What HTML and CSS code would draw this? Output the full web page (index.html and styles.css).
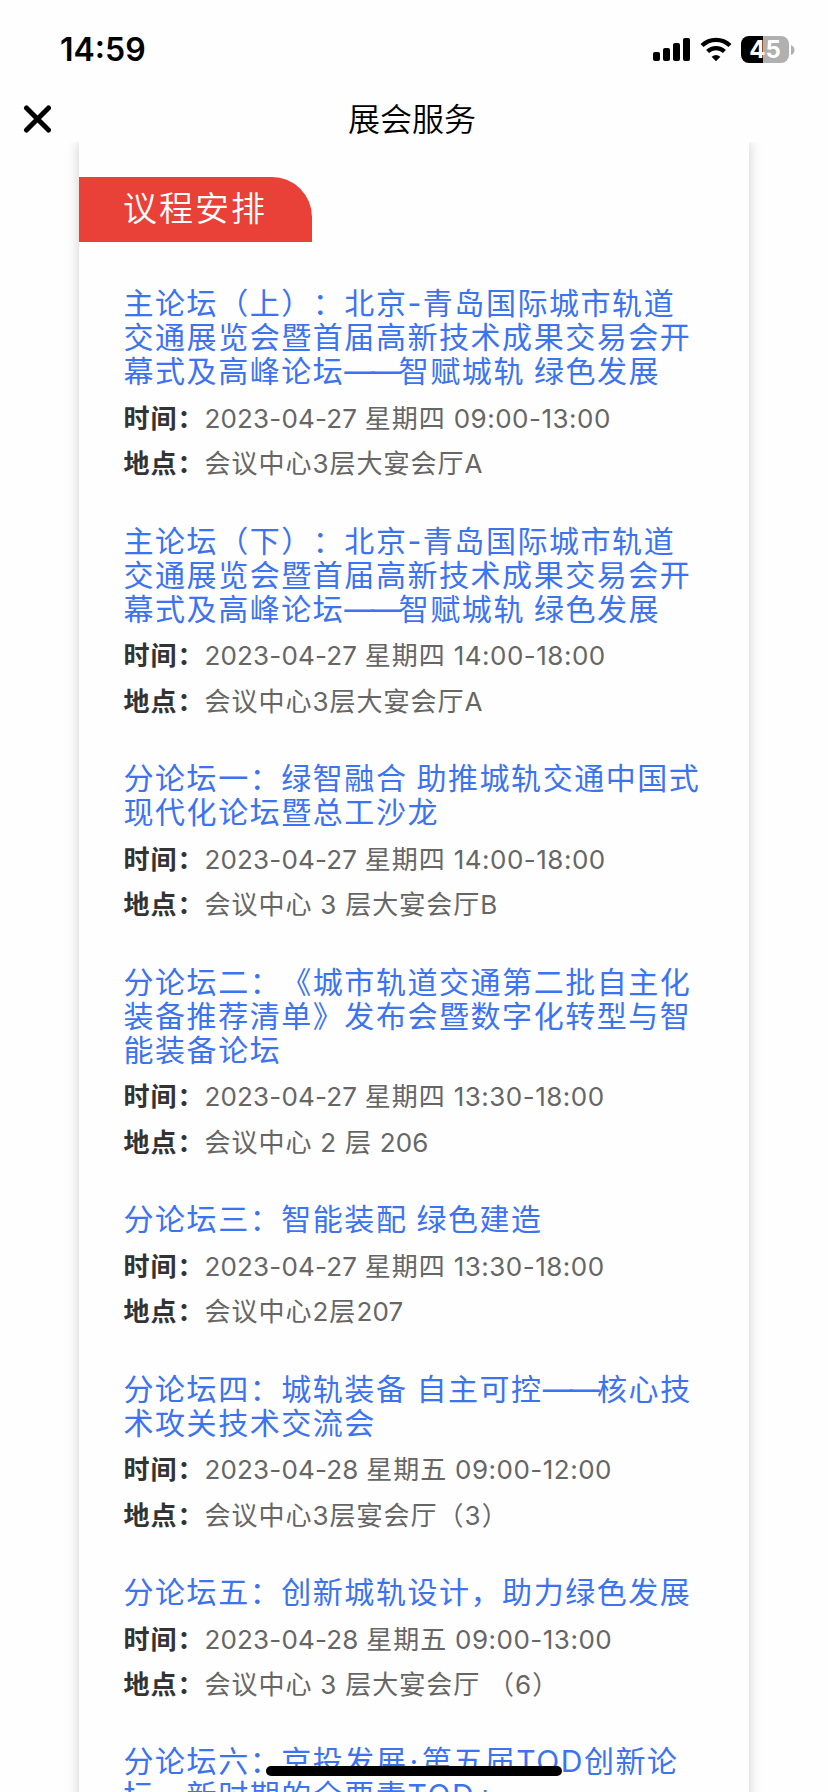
FILE: index.html
```html
<!DOCTYPE html>
<html lang="zh-CN">

<head>
    <meta charset="UTF-8">
    <title>展会服务</title>
    <link rel="stylesheet" href="styles.css">
</head>

<body>
    <div class="status-bar">
        <span class="clock">14:59</span>
        <div class="status-icons">
            <svg class="signal" width="37" height="23" viewBox="0 0 37 23">
                <rect x="0" y="14" width="7" height="9" rx="2" />
                <rect x="10" y="10" width="7" height="13" rx="2" />
                <rect x="20" y="5" width="7" height="18" rx="2" />
                <rect x="30" y="0" width="7" height="23" rx="2" />
            </svg>
            <svg class="wifi" width="32" height="25" viewBox="0 0 32 25">
                <path d="M2 8.600a20 20 0 0 1 28 0M7.600 14.500a12 12 0 0 1 16.800 0" fill="none" stroke="#000" stroke-width="4.200" />
                <path d="M16 24.300l-4.400-4.600q4.400-3.600 8.800 0z" />
            </svg>
            <div class="battery"><span>45</span></div>
            <svg class="battery-tip" width="4" height="10" viewBox="0 0 4 10">
                <path d="M0 0q3.500 1.500 3.500 5t-3.500 5z" fill="#b0b0b0" />
            </svg>
        </div>
    </div>

    <div class="nav-bar">
        <svg class="close" width="28" height="28" viewBox="0 0 28 28">
            <path d="M3.500 3l22 22M25.500 3l-22 22" stroke="#000" stroke-width="5" stroke-linecap="round" />
        </svg>
        <h1>展会服务</h1>
    </div>

    <div class="page">
        <div class="card">
            <h2 class="section-tag">议程安排</h2>

            <div class="agenda">
                <div class="agenda-item">
                    <h3>主论坛（上）：北京-青岛国际城市轨道<br>交通展览会暨首届高新技术成果交易会开<br>幕式及高峰论坛<span class="dash">——</span>智赋城轨 绿色发展</h3>
                    <p><b>时间：</b><span class="date">2023-04-27</span> 星期四 <span class="time">09:00-13:00</span></p>
                    <p><b>地点：</b>会议中心3层大宴会厅A</p>
                </div>
                <div class="agenda-item">
                    <h3>主论坛（下）：北京-青岛国际城市轨道<br>交通展览会暨首届高新技术成果交易会开<br>幕式及高峰论坛<span class="dash">——</span>智赋城轨 绿色发展</h3>
                    <p><b>时间：</b><span class="date">2023-04-27</span> 星期四 <span class="time">14:00-18:00</span></p>
                    <p><b>地点：</b>会议中心3层大宴会厅A</p>
                </div>
                <div class="agenda-item">
                    <h3>分论坛一：绿智融合 助推城轨交通中国式<br>现代化论坛暨总工沙龙</h3>
                    <p><b>时间：</b><span class="date">2023-04-27</span> 星期四 <span class="time">14:00-18:00</span></p>
                    <p><b>地点：</b>会议中心 3 层大宴会厅B</p>
                </div>
                <div class="agenda-item">
                    <h3>分论坛二：《城市轨道交通第二批自主化<br>装备推荐清单》发布会暨数字化转型与智<br>能装备论坛</h3>
                    <p><b>时间：</b><span class="date">2023-04-27</span> 星期四 <span class="time">13:30-18:00</span></p>
                    <p><b>地点：</b>会议中心 2 层 <span class="date">206</span></p>
                </div>
                <div class="agenda-item">
                    <h3>分论坛三：智能装配 绿色建造</h3>
                    <p><b>时间：</b><span class="date">2023-04-27</span> 星期四 <span class="time">13:30-18:00</span></p>
                    <p><b>地点：</b>会议中心2层<span class="date">207</span></p>
                </div>
                <div class="agenda-item">
                    <h3>分论坛四：城轨装备 自主可控<span class="dash">——</span>核心技<br>术攻关技术交流会</h3>
                    <p><b>时间：</b><span class="date">2023-04-28</span> 星期五 <span class="time">09:00-12:00</span></p>
                    <p><b>地点：</b>会议中心3层宴会厅（3）</p>
                </div>
                <div class="agenda-item">
                    <h3>分论坛五：创新城轨设计，助力绿色发展</h3>
                    <p><b>时间：</b><span class="date">2023-04-28</span> 星期五 <span class="time">09:00-13:00</span></p>
                    <p><b>地点：</b>会议中心 3 层大宴会厅 （6）</p>
                </div>
                <div class="agenda-item">
                    <h3>分论坛六：京投发展<span class="dot">·</span>第五届TOD创新论<br>坛，新时期的全要素TOD+</h3>
                </div>
            </div>
        </div>
    </div>

    <div class="home-indicator"></div>
</body>

</html>
```
FILE: styles.css
```css
body {
    font-family: Inter, "Noto Sans CJK SC", sans-serif;
    font-weight: 400;
    background: #fefefe;
    color: #000;
    margin: 0;
    height: 1792px;
    overflow: hidden;
    display: flex;
    flex-direction: column;
    text-spacing-trim: space-all;
}

h1,
h2,
h3,
p {
    margin: 0;
    font-weight: inherit;
}

.status-bar {
    height: 98px;
    flex: none;
    box-sizing: border-box;
    padding: 1px 33px 0 60px;
    display: flex;
    align-items: center;
    justify-content: space-between;
}

.clock {
    font-size: 32px;
    font-weight: 600;
}

.status-icons {
    display: flex;
    align-items: center;
}

.signal {
    margin-right: 10px;
}

.wifi {
    margin-right: 9px;
}

.battery {
    width: 48px;
    height: 27px;
    border-radius: 8px;
    background: linear-gradient(90deg, #000 22px, #b0b0b0 22px);
    color: #fff;
    font-size: 24px;
    font-weight: 700;
    line-height: 27px;
    text-align: center;
}

.battery-tip {
    margin-left: 2px;
}

.nav-bar {
    height: 44px;
    flex: none;
    display: grid;
    grid-template-columns: 74px 1fr 78px;
    align-items: center;
}

.close {
    margin: -2px 0 0 23px;
}

.nav-bar h1 {
    font-size: 32px;
    font-weight: 350;
    line-height: 43px;
    height: 44px;
    text-align: center;
}

.page {
    flex: 1;
    min-height: 0;
    overflow: hidden;
    padding: 0 79px;
}

.card {
    height: 1700px;
    padding-top: 35px;
    background: #fefefe;
    box-shadow: 0 0 12px rgba(0, 0, 0, 0.2);
}

.section-tag {
    width: 233px;
    height: 65px;
    box-sizing: border-box;
    padding-left: 44px;
    border-top-right-radius: 40px;
    background: #e94038;
    color: #fff;
    font-size: 34px;
    font-weight: 350;
    line-height: 64px;
    letter-spacing: 2px;
}

.agenda {
    padding: 44px 0 0 44.5px;
}

.agenda-item {
    margin-bottom: 37.1px;
    white-space: nowrap;
}

.agenda-item h3 {
    margin-bottom: 7.6px;
    color: #3c73f0;
    font-size: 30px;
    line-height: 34.1px;
    letter-spacing: 1.55px;
    word-spacing: -1px;
}

.agenda-item p {
    color: #666;
    font-size: 26px;
    line-height: 45.3px;
    letter-spacing: 1px;
    word-spacing: -0.5px;
}

.agenda-item b {
    color: #333;
    font-weight: 700;
}

.date {
    letter-spacing: 0.15px;
}

.time {
    letter-spacing: 0.5px;
}

.dash {
    letter-spacing: -2.8px;
}

.dot {
    padding: 0 2px;
}

.home-indicator {
    position: absolute;
    left: 266px;
    bottom: 16px;
    width: 296px;
    height: 10px;
    border-radius: 5px;
    background: #000;
}
```
